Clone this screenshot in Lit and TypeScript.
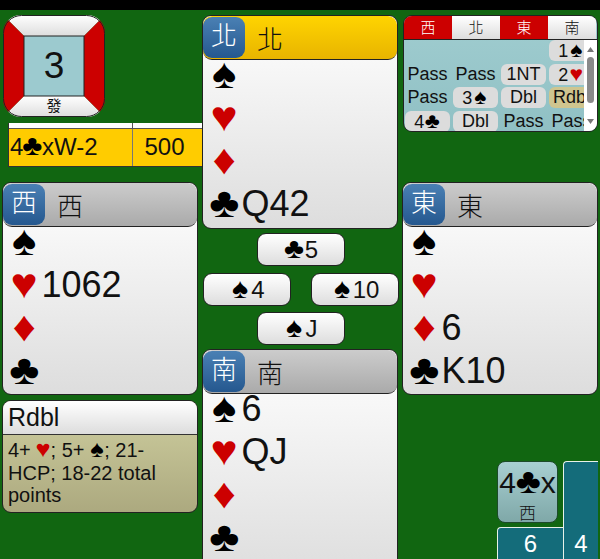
import { LitElement, html, css } from "lit";
import { customElement } from "lit/decorators.js";

const S = html`<span class="s">♠</span>`;
const H = html`<span class="s r">♥</span>`;
const D = html`<span class="s r">♦</span>`;
const C = html`<span class="s">♣</span>`;

const suits = [S, H, D, C];

@customElement("app-root")
export class AppRoot extends LitElement {
  static styles = css`
    :host {
      display: block;
      width: 600px;
      height: 559px;
      overflow: hidden;
      position: relative;
      background: #116611;
      font-family: "Liberation Sans", Arial, "Noto Sans CJK TC", sans-serif;
      color: #111;
    }
    .topbar { height: 10px; background: #000; }
    .cols {
      display: grid;
      grid-template-columns: 196px 196px 196px;
      column-gap: 4px;
      padding: 5px 0 0 2px;
      align-items: start;
    }
    .col { display: flex; flex-direction: column; min-width: 0; }
    .s {
      display: inline-block;
      flex: none;
      font-size: 1.18em;
      line-height: 1;
      width: 0.78em;
      text-align: center;
      color: #000;
      transform: scaleX(1.08);
    }
    .r { color: #cc0000; }

    .vuln { display: block; width: 102px; height: 102px; margin-left: 1px; }
    .vuln text { font-family: "Liberation Sans", sans-serif; }
    .vuln .east { font-family: "Noto Sans CJK TC", sans-serif; }

    .score {
      width: 193px;
      margin: 6px 0 0 6px;
      border-left: 1px solid #333;
      border-bottom: 1px solid #333;
      font-size: 24px;
    }
    .score-head { display: grid; grid-template-columns: 123px 1fr; height: 5px; background: #fff; border-bottom: 1px solid #555; }
    .score-head div + div { border-left: 1px solid #555; }
    .score-row { display: grid; grid-template-columns: 123px 1fr; height: 37px; background: #ffcc00; line-height: 36px; white-space: nowrap; }
    .score-row div:first-child { padding-left: 1px; }
    .score-row div + div { border-left: 1px solid #777; text-align: center; padding-right: 6px; }
    .score-row .s { width: 0.66em; }

    .hand {
      border: 1px solid #222;
      border-radius: 9px;
      background: linear-gradient(#fff, #ddd);
      box-sizing: border-box;
      overflow: hidden;
    }
    .hand-head {
      display: flex;
      align-items: center;
      position: relative;
      height: 43px;
      background: linear-gradient(#ccc, #aaa);
      border-bottom: 1px solid #222;
      border-radius: 9px;
      font-size: 26px;
      font-family: "Noto Sans CJK TC", sans-serif;
      font-weight: 300;
      line-height: 34px;
    }
    .hand-head.active { background: linear-gradient(#ffd400, #e8b400); }
    .badge {
      width: 42px;
      height: 41px;
      margin-right: 12px;
      border-radius: 9px;
      background: linear-gradient(#4a80b4, #25588f);
      color: #fff;
      text-align: center;
      font-size: 26px;
    }
    .rows { margin-top: -7px; }
    .row {
      display: flex;
      align-items: center;
      height: 43px;
      font-size: 36px;
      padding-left: 4px;
      white-space: nowrap;
    }
    .row .s { width: 0.81em; }
    .west { margin-top: 15px; height: 213px; }
    .east { margin-top: 50px; height: 213px; }
    .north { height: 214px; }
    .south { margin-top: 4px; height: 230px; flex: none; }

    .tricks { display: grid; row-gap: 6.5px; margin-top: 4px; }
    .trick-row { display: flex; justify-content: center; }
    .trick-row.split { justify-content: space-between; width: 196px; margin-left: 1px; }
    .trick {
      width: 88px;
      height: 33px;
      box-sizing: border-box;
      border: 1px solid #222;
      border-radius: 9px;
      background: linear-gradient(#fff, #ddd);
      font-size: 24px;
      line-height: 31px;
      text-align: center;
    }

    .expl {
      margin-top: 5px;
      height: 113px;
      box-sizing: border-box;
      border: 1px solid #222;
      border-radius: 9px;
      overflow: hidden;
      background: linear-gradient(#cfcfa0, #aca97f);
    }
    .expl-head {
      height: 34px;
      line-height: 32px;
      font-size: 25px;
      padding-left: 5px;
      background: linear-gradient(#fff, #ddd);
      border-bottom: 1px solid #333;
      box-sizing: border-box;
    }
    .expl-body { padding: 3px 10px 0 5px; font-size: 20px; line-height: 22px; }
    .expl-body .s { width: 0.6em; }

    .bids {
      height: 117px;
      margin-left: 1px;
      border: 1px solid #222;
      border-radius: 9px;
      overflow: hidden;
      box-sizing: border-box;
      background: linear-gradient(#a0cdd0, #90c0c4);
      display: flex;
      flex-direction: column;
    }
    .bids-head { display: grid; grid-template-columns: repeat(4, 48px); flex: none; height: 24px; border-bottom: 1px solid #222; box-sizing: border-box; }
    .bids-head div {
      text-align: center;
      font-family: "Noto Sans CJK TC", sans-serif;
      font-weight: 300;
      font-size: 15px;
      line-height: 22px;
      background: linear-gradient(#fff, #ddd);
    }
    .bids-head div.v { background: #cc0000; color: #fff; }
    .bids-main { flex: 1; display: flex; min-height: 0; }
    .bids-grid {
      flex: 1;
      min-width: 0;
      overflow: hidden;
      display: grid;
      grid-template-columns: repeat(4, 48px);
      grid-auto-rows: 23.5px;
      font-size: 18px;
      padding-left: 1px;
    }
    .bid { text-align: center; line-height: 21px; white-space: nowrap; height: 21px; width: 45px; }
    .bid.btn { background: #dcdcdc; border-radius: 6px; }
    .bid.hl { background: #cfc58f; border-radius: 6px 0 0 6px; overflow: hidden; }
    .sb { flex: none; width: 13px; background: #fff; position: relative; display: flex; flex-direction: column; align-items: center; justify-content: space-between; padding: 7px 0 7px; box-sizing: border-box; }
    .sb svg { display: block; }
    .thumb { position: absolute; top: 17px; left: 3px; width: 7px; height: 46px; border-radius: 4px; background: #8a8a8a; }

    .played {
      position: absolute;
      left: 497px;
      top: 461px;
      width: 61px;
      height: 62px;
      box-sizing: border-box;
      border: 1px solid #1d4a2a;
      border-radius: 8px;
      background: linear-gradient(#a8cfd2, #7fa8a8);
      text-align: center;
      font-size: 30px;
      line-height: 34px;
      padding-top: 2px;
      white-space: nowrap;
    }
    .played .s { width: 0.7em; }
    .played small { display: block; font-size: 17px; line-height: 24px; font-family: "Noto Sans CJK TC", sans-serif; font-weight: 300; }
    .stack {
      position: absolute;
      box-sizing: border-box;
      background: #146c7a;
      color: #fff;
      border: 1px solid #e8f2e8;
      border-bottom: none;
      border-right: none;
      border-radius: 4px 0 0 0;
      text-align: center;
      font-size: 24px;
    }
    .st6 { left: 497px; top: 527px; width: 66px; height: 32px; line-height: 32px; }
    .st4 { left: 563px; top: 461px; width: 35px; height: 98px; padding-top: 66px; line-height: 32px; }
  `;

  private hand(cls: string, name: string, cards: string[], active = false) {
    return html`<div class="hand ${cls}">
      <div class="hand-head ${active ? "active" : ""}"><div class="badge">${name}</div>${name}</div>
      <div class="rows">
        ${suits.map((s, i) => html`<div class="row">${s}${cards[i]}</div>`)}
      </div>
    </div>`;
  }

  private bid(content: unknown, kind = "") {
    return html`<div class="bid ${kind}">${content}</div>`;
  }

  render() {
    return html`
      <div class="topbar"></div>
      <div class="cols">
        <div class="col">
          <svg class="vuln" viewBox="0 0 102 102">
            <defs>
              <linearGradient id="wg" x1="0" y1="0" x2="0" y2="1"><stop offset="0" stop-color="#fff" /><stop offset="1" stop-color="#ddd" /></linearGradient>
              <clipPath id="rr"><rect x="0" y="0" width="102" height="102" rx="18" /></clipPath>
            </defs>
            <g clip-path="url(#rr)">
              <polygon points="0,0 102,0 81,21 21,21" fill="url(#wg)" />
              <polygon points="0,102 102,102 81,81 21,81" fill="url(#wg)" />
              <polygon points="0,0 21,21 21,81 0,102" fill="#cc0000" />
              <polygon points="102,0 81,21 81,81 102,102" fill="#cc0000" />
              <rect x="21" y="21" width="60" height="60" fill="#9ccacf" stroke="#222" />
            </g>
            <rect x="0.5" y="0.5" width="101" height="101" rx="18" fill="none" stroke="#222" />
            <text x="51" y="63" font-size="37" text-anchor="middle" fill="#111">3</text>
            <text class="east" x="51" y="96" font-size="15" text-anchor="middle" fill="#111">發</text>
          </svg>
          <div class="score">
            <div class="score-head"><div></div><div></div></div>
            <div class="score-row"><div>4${C}xW-2</div><div>500</div></div>
          </div>
          ${this.hand("west", "西", ["", "1062", "", ""])}
          <div class="expl">
            <div class="expl-head">Rdbl</div>
            <div class="expl-body">4+ ${H}; 5+ ${S}; 21-HCP; 18-22 total points</div>
          </div>
        </div>
        <div class="col">
          ${this.hand("north", "北", ["", "", "", "Q42"], true)}
          <div class="tricks">
            <div class="trick-row"><div class="trick">${C}5</div></div>
            <div class="trick-row split"><div class="trick">${S}4</div><div class="trick">${S}10</div></div>
            <div class="trick-row"><div class="trick">${S}J</div></div>
          </div>
          ${this.hand("south", "南", ["6", "QJ", "", ""])}
        </div>
        <div class="col">
          <div class="bids">
            <div class="bids-head">
              <div class="v">西</div><div>北</div><div class="v">東</div><div>南</div>
            </div>
            <div class="bids-main">
              <div class="bids-grid">
                <div></div><div></div><div></div>${this.bid(html`1${S}`, "btn")}
                ${this.bid("Pass")}${this.bid("Pass")}${this.bid("1NT", "btn")}${this.bid(html`2${H}`, "btn")}
                ${this.bid("Pass")}${this.bid(html`3${S}`, "btn")}${this.bid("Dbl", "btn")}${this.bid("Rdbl", "hl")}
                ${this.bid(html`4${C}`, "btn")}${this.bid("Dbl", "btn")}${this.bid("Pass")}${this.bid("Pass")}
              </div>
              <div class="sb">
                <svg width="7" height="5" viewBox="0 0 7 5"><path d="M3.5 0L7 5H0Z" fill="#777" /></svg>
                <div class="thumb"></div>
                <svg width="7" height="5" viewBox="0 0 7 5"><path d="M3.5 5L7 0H0Z" fill="#777" /></svg>
              </div>
            </div>
          </div>
          ${this.hand("east", "東", ["", "", "6", "K10"])}
        </div>
      </div>
      <div class="played">4${C}x<small>西</small></div>
      <div class="stack st6">6</div>
      <div class="stack st4">4</div>
    `;
  }
}
